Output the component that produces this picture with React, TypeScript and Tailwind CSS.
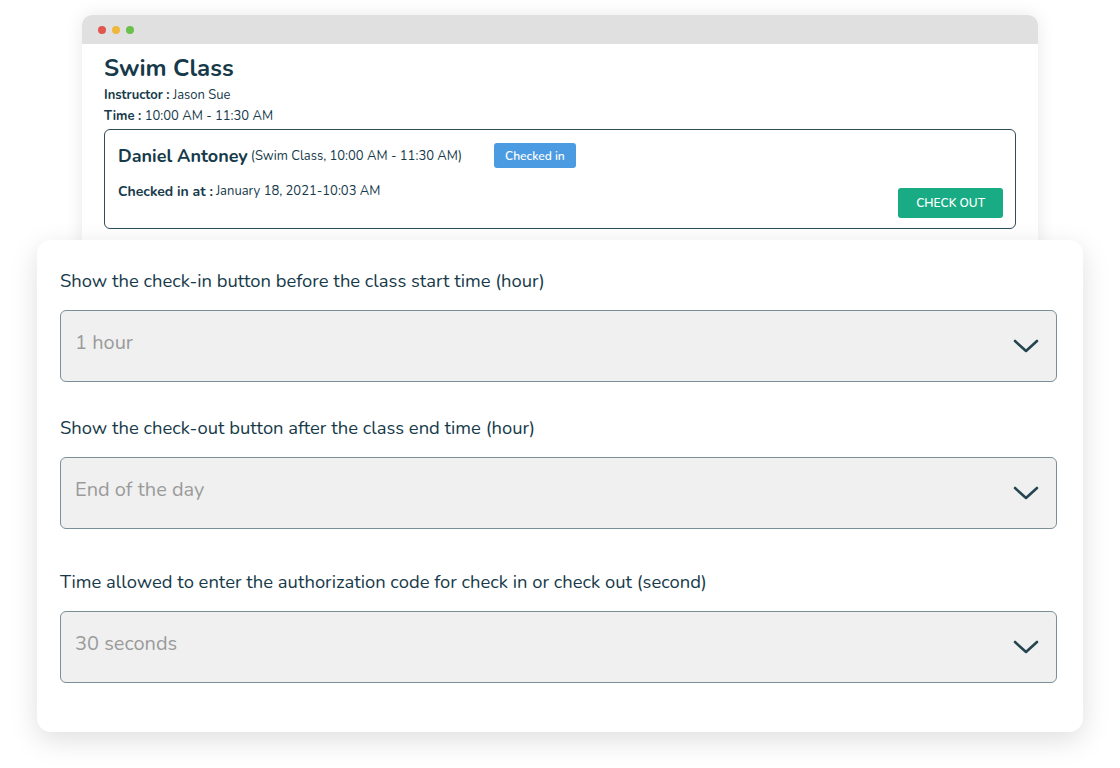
import React from "react";

const FONT = { fontFamily: '"Nunito", "Lato", "Open Sans", sans-serif' };

const SETTINGS = [
  { label: "Show the check-in button before the class start time (hour)", value: "1 hour", gap: "mt-0" },
  { label: "Show the check-out button after the class end time (hour)", value: "End of the day", gap: "mt-[34px]" },
  { label: "Time allowed to enter the authorization code for check in or check out (second)", value: "30 seconds", gap: "mt-[41px]" },
];

function Chevron() {
  return (
    <svg className="h-[16px] w-[26px]" viewBox="0 0 26 16" fill="none" aria-hidden>
      <path d="M2 3 L13 13 L24 3" stroke="#254550" strokeWidth="2.6" strokeLinecap="round" strokeLinejoin="round" />
    </svg>
  );
}

function SelectBox({ value }: { value: string }) {
  return (
    <div className="mt-[17px] flex h-[72px] items-center justify-between rounded-[6px] border-[1.5px] border-[#7a8f97] bg-[#f0f0f0] pl-[14px] pr-[17px]">
      <span className="pb-[6px] text-[20px] text-[#9b9b9b]">{value}</span>
      <Chevron />
    </div>
  );
}

export default function App() {
  return (
    <div className="h-[768px] w-[1120px] overflow-hidden bg-white text-[#163a4a]" style={FONT}>
      {/* browser window */}
      <div className="ml-[82px] mt-[15px] w-[956px] rounded-t-[10px] bg-white pb-[22px] shadow-[0_0_18px_rgba(0,0,0,0.09)]">
        <div className="flex h-[29px] items-center gap-[6px] rounded-t-[10px] bg-[#e0e0e0] pl-[16px]">
          <span className="h-[8px] w-[8px] rounded-full bg-[#e0574f]" />
          <span className="h-[8px] w-[8px] rounded-full bg-[#efb83b]" />
          <span className="h-[8px] w-[8px] rounded-full bg-[#69c04b]" />
        </div>
        <div className="px-[22px]">
          <h1 className="pt-[8px] text-[24px] font-bold leading-[32px]">Swim Class</h1>
          <div className="mt-[1px] text-[13px] leading-[20px]">
            <span className="font-bold">Instructor :</span> Jason Sue
          </div>
          <div className="mt-[1px] text-[13px] leading-[20px]">
            <span className="font-bold">Time :</span> 10:00 AM - 11:30 AM
          </div>
          <div className="mt-[3px] flex h-[100px] w-[912px] justify-between rounded-[6px] border-[1.5px] border-[#2f4c5a] pb-[10px] pl-[13px] pr-[12px] pt-[13px]">
            <div>
              <div className="flex items-center">
                <span className="text-[18px] font-bold leading-[24px]">Daniel Antoney</span>
                <span className="ml-[3px] mt-[2px] text-[13px]">(Swim Class, 10:00 AM - 11:30 AM)</span>
                <span className="ml-[32px] flex h-[25px] items-center rounded-[3px] bg-[#4a9be1] px-[11px] text-[12px] font-semibold text-white">
                  Checked in
                </span>
              </div>
              <div className="mt-[13px] flex items-center">
                <span className="text-[14px] font-bold">Checked in at :</span>
                <span className="ml-[3px] text-[13px]">January 18, 2021-10:03 AM</span>
              </div>
            </div>
            <div className="flex items-end">
              <span className="flex h-[30px] items-center rounded-[3px] bg-[#19ab84] px-[18px] text-[12px] font-semibold text-white">
                CHECK OUT
              </span>
            </div>
          </div>
        </div>
      </div>

      {/* settings card */}
      <div className="relative z-10 -mt-[11px] ml-[37px] w-[1046px] rounded-[14px] bg-white pb-[49px] pl-[23px] pr-[26px] pt-[29px] shadow-[0_8px_28px_rgba(0,0,0,0.13)]">
        {SETTINGS.map((s) => (
          <div key={s.label} className={s.gap}>
            <div className="text-[18.4px] leading-[24px]">{s.label}</div>
            <SelectBox value={s.value} />
          </div>
        ))}
      </div>
    </div>
  );
}
